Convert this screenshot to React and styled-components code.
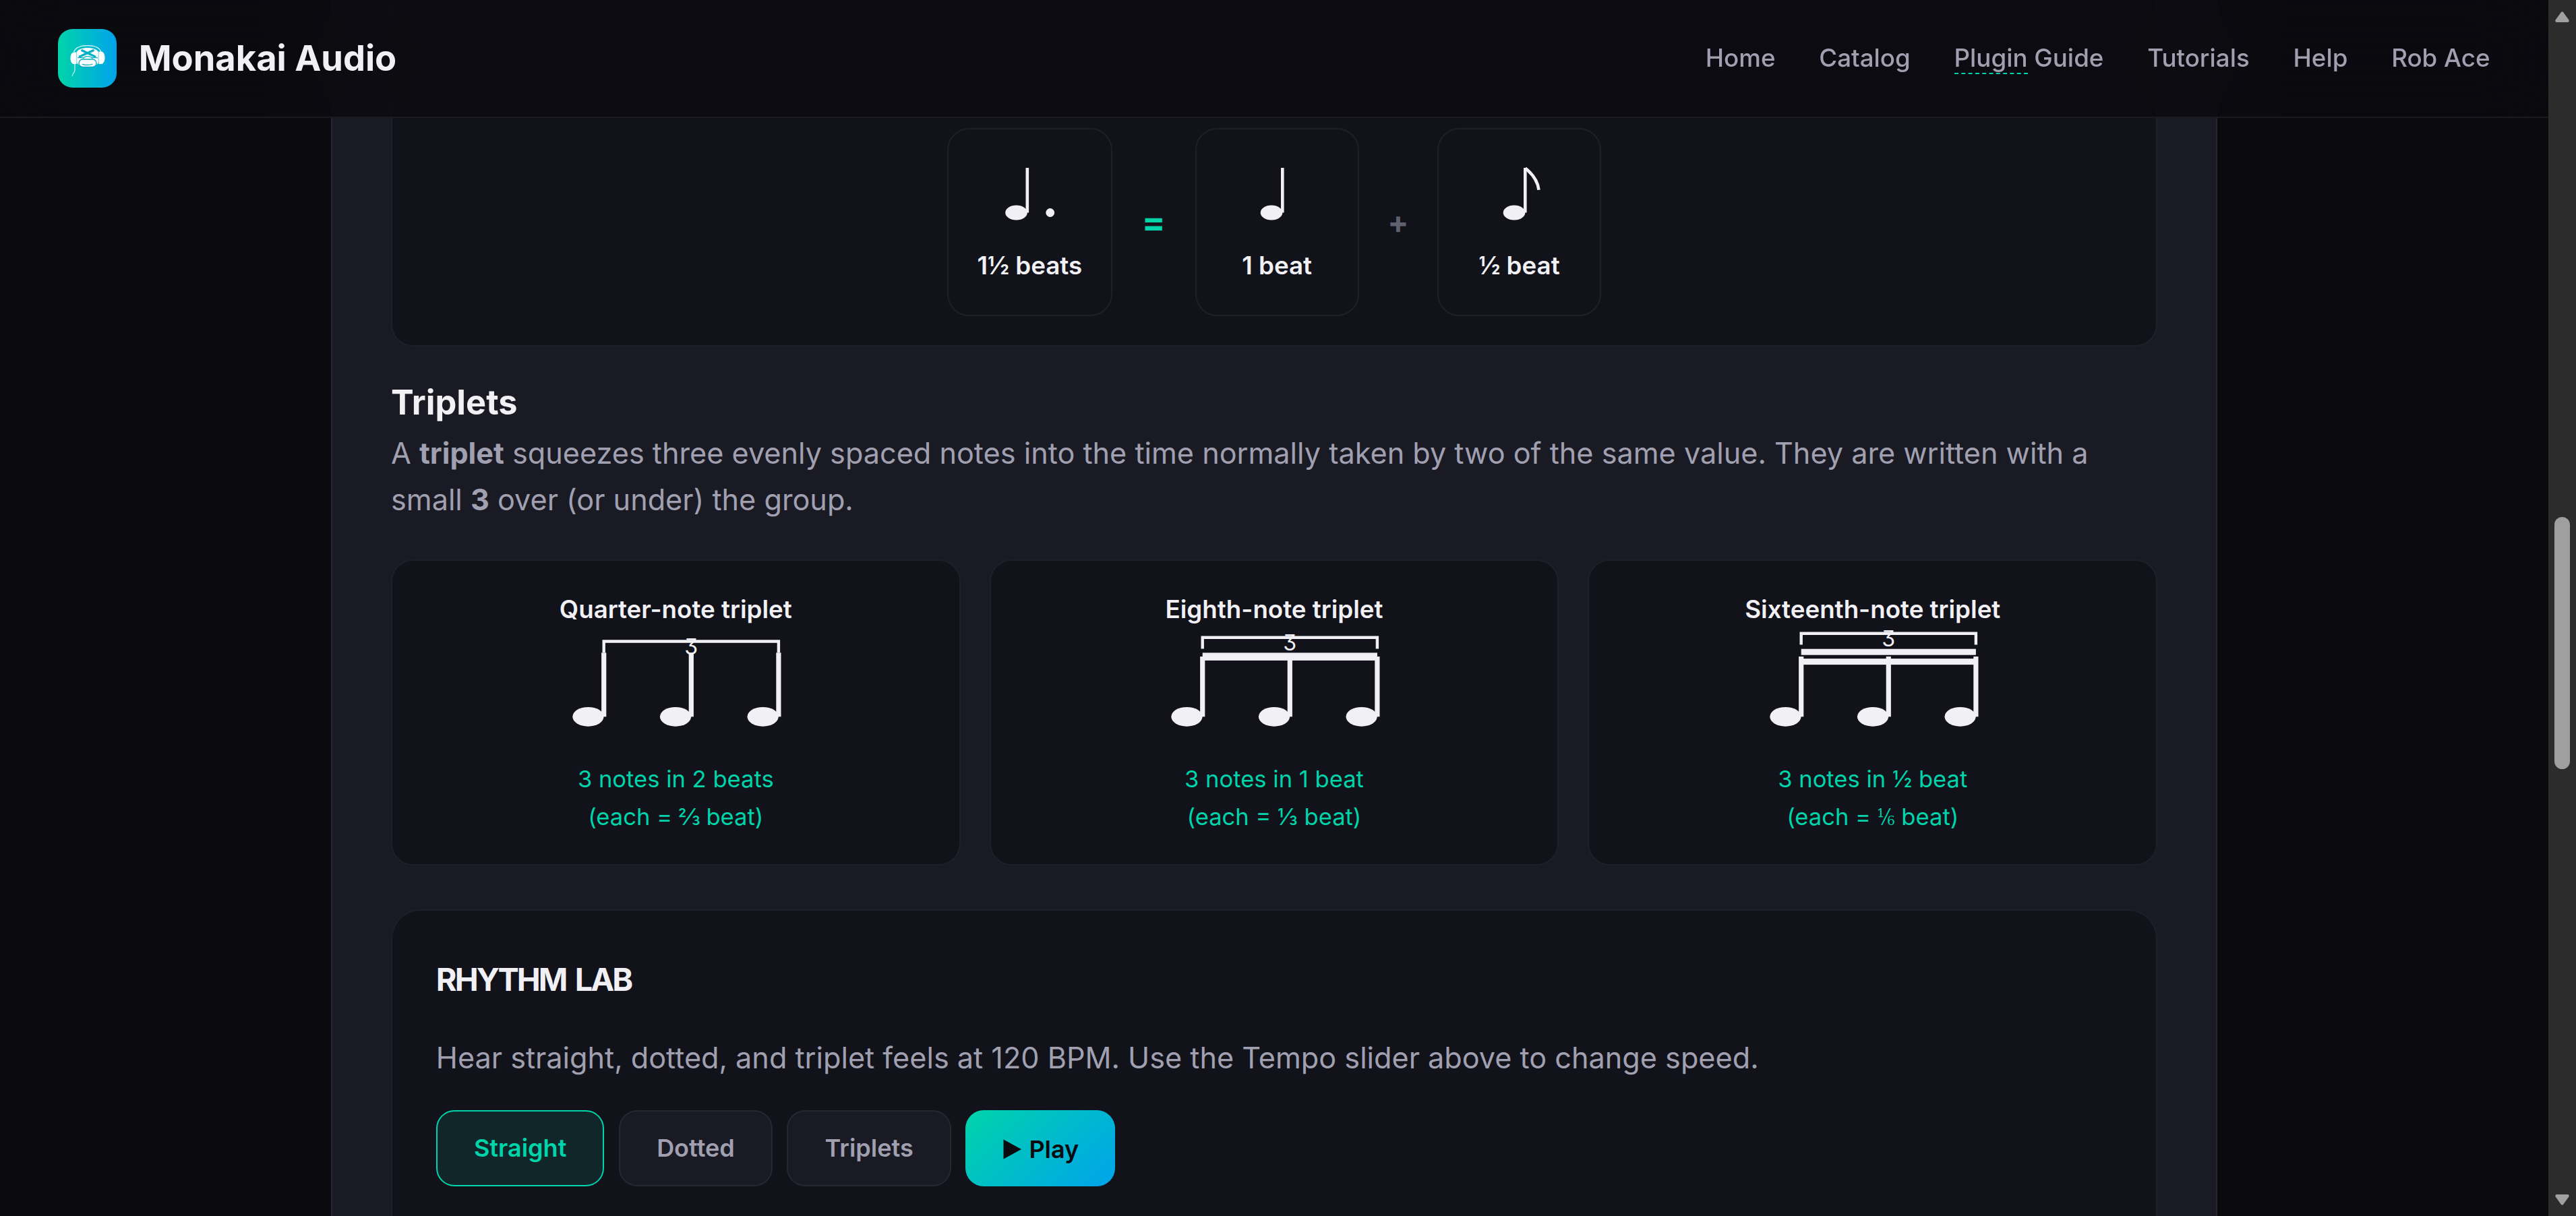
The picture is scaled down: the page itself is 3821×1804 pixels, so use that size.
import React from 'react'
import styled, { createGlobalStyle, ThemeProvider, css } from 'styled-components'

const theme = {
  colors: {
    page: '#0a0a0f',
    card: '#1a1a24',
    panel: '#12121a',
    border: 'rgba(255, 255, 255, 0.06)',
    text: '#f0f0f5',
    muted: '#a0a0b0',
    dim: '#606070',
    accent: '#00d4aa',
    accentBlue: '#00a3eb',
  },
}

const GlobalStyle = createGlobalStyle`
  *, *::before, *::after {
    box-sizing: border-box;
  }

  body {
    margin: 0;
    background: #0a0a0f;
    font-family: Inter, 'Liberation Sans', sans-serif;
    font-size: 43.2px;
    line-height: 1.6;
  }
`

const Window = styled.div`
  display: flex;
  height: 1804px;
  overflow: hidden;
  background: ${({ theme }) => theme.colors.page};
  color: ${({ theme }) => theme.colors.text};
`

const Viewport = styled.div`
  position: relative;
  flex: 1;
  height: 100%;
  overflow: hidden;
`

/* header */

const Header = styled.header`
  position: absolute;
  top: 0;
  left: 0;
  right: 0;
  z-index: 10;
  display: flex;
  align-items: center;
  justify-content: space-between;
  height: 175px;
  padding: 0 86.4px;
  border-bottom: 2px solid #1a1a1f;
  background: rgba(10, 10, 15, 0.8);
  backdrop-filter: blur(54px);
`

const Brand = styled.a`
  display: flex;
  align-items: center;
  gap: 32.4px;
  font-size: 52.4px;
  font-weight: 700;
  line-height: 86.4px;
`

const BrandMark = styled.span`
  display: block;
  width: 87px;
  height: 87px;
  border-radius: 21.6px;
  background: linear-gradient(
    90deg,
    ${({ theme }) => theme.colors.accent},
    ${({ theme }) => theme.colors.accentBlue}
  );

  svg {
    display: block;
  }
`

const Nav = styled.nav`
  display: flex;
  gap: 64.8px;
`

const NavLink = styled.a`
  font-size: 36.72px;
  font-weight: 500;
  line-height: 58.75px;
  color: ${({ theme }) => theme.colors.muted};
`

const Term = styled.span`
  border-bottom: 2px dashed ${({ theme }) => theme.colors.accent};
`

/* page content */

const Article = styled.main`
  width: 2798px;
  height: 1900px;
  margin: 0 auto;
  padding: 0 87px;
  border: solid #26262f;
  border-width: 0 2px;
  background: ${({ theme }) => theme.colors.card};
`

const panel = css`
  border: 2px solid ${({ theme }) => theme.colors.border};
  background: ${({ theme }) => theme.colors.panel};
`

const EquationPanel = styled.section`
  ${panel}
  display: flex;
  align-items: flex-end;
  justify-content: center;
  gap: 43.2px;
  height: 514px;
  padding: 0 43.2px 43.2px;
  border-top: 0;
  border-radius: 0 0 32.4px 32.4px;
`

const NoteChip = styled.div`
  display: flex;
  flex-direction: column;
  align-items: center;
  min-width: 243px;
  padding: 43.2px 42.6px;
  border: 2px solid ${({ theme }) => theme.colors.border};
  border-radius: 32.4px;
  font-size: 36.72px;
  font-weight: 600;
  line-height: 58.75px;
  white-space: nowrap;

  svg {
    display: block;
  }
`

const Operator = styled.span`
  display: flex;
  align-items: center;
  justify-content: center;
  width: ${({ $equals }) => ($equals ? '36.5px' : '30px')};
  height: 279px;
  color: ${({ $equals, theme }) =>
    $equals ? theme.colors.accent : theme.colors.dim};
  font-size: ${({ $equals }) => ($equals ? '52px' : '46px')};
  font-weight: 700;
`

const Heading = styled.h3`
  margin: 43px 0 0;
  font-size: 50.54px;
  font-weight: 700;
  line-height: 80.8px;
`

const Text = styled.p`
  margin: 0;
  color: ${({ theme }) => theme.colors.muted};
  font-size: 43.2px;
  line-height: 69.12px;
`

const TripletGrid = styled.div`
  display: grid;
  grid-template-columns: repeat(3, 1fr);
  gap: 43.2px;
  margin-top: 54px;
`

const TripletCard = styled.div`
  ${panel}
  display: flex;
  flex-direction: column;
  align-items: center;
  height: 454px;
  padding: 43.2px;
  border-radius: 32.4px;

  svg {
    display: block;
    overflow: visible;
  }
`

const TripletTitle = styled.strong`
  font-size: 36.72px;
  font-weight: 600;
  line-height: 58.75px;
`

const TripletCaption = styled.span`
  color: ${({ theme }) => theme.colors.accent};
  font-size: 34.56px;
  line-height: 55.3px;
`

const TupletNumber = styled.text`
  font-size: 32px;
  font-feature-settings: 'cv09';
`

const Fraction = styled.span`
  margin: 0 -1px;
`

const SerifFraction = styled.span`
  display: inline-block;
  margin: 0 -3.5px;
  font-family: 'DejaVu Serif', serif;
  font-size: 34px;
  line-height: 1;
  transform: scaleX(0.8);
`

const Lab = styled.section`
  ${panel}
  height: 700px;
  margin-top: 64.8px;
  padding: 64.8px;
  border-radius: 43.2px;
`

const LabTitle = styled.h4`
  margin: 0 0 45px;
  font-size: 46.8px;
  font-weight: 700;
  line-height: 74px;
  letter-spacing: -2.9px;
  word-spacing: 5px;
`

const ButtonRow = styled.div`
  display: flex;
  gap: 21.6px;
  margin-top: 43.2px;
`

const Button = styled.button`
  display: flex;
  align-items: center;
  height: 113px;
  padding: 0 54.1px;
  border: 2px solid ${({ theme }) => theme.colors.border};
  border-radius: 27px;
  background: ${({ theme }) => theme.colors.card};
  color: ${({ theme }) => theme.colors.muted};
  font-family: inherit;
  font-size: 36px;
  font-weight: 600;

  ${({ $active }) =>
    $active &&
    css`
      border-color: ${({ theme }) => theme.colors.accent};
      background: rgba(0, 212, 170, 0.1);
      color: ${({ theme }) => theme.colors.accent};
    `}
`

const PlayButton = styled(Button)`
  gap: 11px;
  padding: 4px 54px 0 56px;
  border: 0;
  background: linear-gradient(
    135deg,
    ${({ theme }) => theme.colors.accent},
    ${({ theme }) => theme.colors.accentBlue}
  );
  color: ${({ theme }) => theme.colors.page};
`

/* scrollbar */

const Scrollbar = styled.div`
  display: flex;
  flex-direction: column;
  align-items: center;
  justify-content: space-between;
  width: 41px;
  height: 100%;
  padding: 17px 0 16px;
  background: #2c2c2c;
`

const Track = styled.div`
  flex: 1;
  padding-top: 734px;
`

const Thumb = styled.div`
  width: 23px;
  height: 374px;
  border-radius: 12px;
  background: #9f9f9f;
`

function MonkeyLogo() {
  return (
    <svg width="87" height="87" viewBox="0 0 87 87" fill="none">
      <path d="M23.500 34C26 27.500 34 24.600 44 24.600S61.500 27.500 64 34" stroke="#e8fbff" strokeWidth="1.2" />
      <path d="M27.500 35C29 30.500 36 28 44 28s14.500 2.500 16.500 7v14c-2 5-8 7.500-16.500 7.500S29.500 54 27.500 49z" fill="#fff" />
      <path d="M24 34.500h3.500v17.500H24c-3.600 0-5.500-4-5.500-8.600S20.400 34.500 24 34.500z" fill="#fff" />
      <path d="M60.500 33.500h3.500c3.600 0 5.500 4.500 5.500 9S67.500 52 64 52h-3.500z" fill="#fff" />
      <path d="M60 34.500v17M27.700 34.500v17" stroke="#5cc7da" strokeWidth="0.700" />
      <path d="M34.500 31.300L56 41.500M53.500 31.300L31 41.500" stroke="#08b2c6" strokeWidth="3.400" />
      <path d="M29 42.600h8.500M50.500 42.600H59" stroke="#08b2c6" strokeWidth="1.400" />
      <path d="M37.500 44c2-4.500 11.500-4.500 13.500 0" fill="#fff" stroke="#08b2c6" strokeWidth="1.200" />
      <rect x="31" y="45" width="26" height="11.500" rx="5.700" fill="#fff" stroke="#08a9bd" strokeWidth="1.400" />
      <path d="M36 52.300c4 1.400 12 1.400 15.500-.3" stroke="#08a9bd" strokeWidth="1.300" />
      <path d="M25 52c-.5 4 .8 7.500-.4 11-1 2.500-3 3-3.400 7" stroke="#e8fbff" strokeWidth="1.100" />
    </svg>
  )
}

function Note({ dotted, flag }) {
  const { text } = theme.colors
  return (
    <svg width="90" height="129.6" viewBox="0 0 90 129.6" fill={text}>
      <ellipse cx={dotted ? 25.5 : 37} cy="80.500" rx="16.300" ry="10.900" />
      <rect x={dotted ? 39.5 : 51} y="14" width="4.600" height="66.500" />
      {dotted && <circle cx="75.700" cy="80.500" r="6.400" />}
      {flag && (
        <path d="M53.500 14.500Q71.500 29 73.500 46.700" fill="none" stroke={text} strokeWidth="4.600" />
      )}
    </svg>
  )
}

// heads are 129.6px apart, each stem sits on the right edge of its head
const HEADS = [50.4, 180, 309.6]

function TripletNotes({ stemTop, beams, bracketTop }) {
  const { text } = theme.colors
  const left = HEADS[0] + 23.3
  const right = HEADS[2] + 23.3
  return (
    <svg width="360" height="194.4" viewBox="0 0 360 194.4" fill={text}>
      {HEADS.map(x => (
        <React.Fragment key={x}>
          <ellipse cx={x} cy="129.300" rx="23.100" ry="14.400" />
          <rect x={x + 19.7} y={stemTop} width="7.200" height={129.3 - stemTop} />
        </React.Fragment>
      ))}
      {beams.map(([y, height]) => (
        <rect key={y} x={left} y={y} width={right - left} height={height} />
      ))}
      <path
        d={`M${left} ${bracketTop + 19}V${bracketTop + 2.2}H${right}V${bracketTop + 19}`}
        fill="none"
        stroke={text}
        strokeWidth="4.400"
      />
      <TupletNumber x={(left + right) / 2} y={bracketTop + 21.5} textAnchor="middle">
        3
      </TupletNumber>
    </svg>
  )
}

const TRIPLETS = [
  {
    title: 'Quarter-note triplet',
    length: '3 notes in 2 beats',
    fraction: <Fraction>⅔</Fraction>,
    notes: { stemTop: 34.3, beams: [], bracketTop: 15.3 },
  },
  {
    title: 'Eighth-note triplet',
    length: '3 notes in 1 beat',
    fraction: '⅓',
    notes: { stemTop: 40, beams: [[34.4, 11.5]], bracketTop: 9.5 },
  },
  {
    title: 'Sixteenth-note triplet',
    length: '3 notes in ½ beat',
    fraction: <SerifFraction>⅙</SerifFraction>,
    notes: { stemTop: 40, beams: [[28.7, 9], [43.1, 9]], bracketTop: 3.6 },
  },
]

const FEELS = ['Straight', 'Dotted', 'Triplets']

export default function App() {
  const [feel, setFeel] = React.useState('Straight')

  return (
    <ThemeProvider theme={theme}>
      <GlobalStyle />
      <Window>
        <Viewport>
          <Header>
            <Brand>
              <BrandMark>
                <MonkeyLogo />
              </BrandMark>
              Monakai Audio
            </Brand>
            <Nav>
              <NavLink>Home</NavLink>
              <NavLink>Catalog</NavLink>
              <NavLink>
                <Term>Plugin</Term> Guide
              </NavLink>
              <NavLink>Tutorials</NavLink>
              <NavLink>Help</NavLink>
              <NavLink>Rob Ace</NavLink>
            </Nav>
          </Header>

          <Article>
            <EquationPanel>
              <NoteChip>
                <Note dotted />
                1½ beats
              </NoteChip>
              <Operator $equals>=</Operator>
              <NoteChip>
                <Note />1 beat
              </NoteChip>
              <Operator>+</Operator>
              <NoteChip>
                <Note flag />½ beat
              </NoteChip>
            </EquationPanel>

            <Heading>Triplets</Heading>
            <Text>
              A <strong>triplet</strong> squeezes three evenly spaced notes into the time
              normally taken by two of the same value. They are written with a small{' '}
              <strong>3</strong> over (or under) the group.
            </Text>

            <TripletGrid>
              {TRIPLETS.map(({ title, length, fraction, notes }) => (
                <TripletCard key={title}>
                  <TripletTitle>{title}</TripletTitle>
                  <TripletNotes {...notes} />
                  <TripletCaption>{length}</TripletCaption>
                  <TripletCaption>(each = {fraction} beat)</TripletCaption>
                </TripletCard>
              ))}
            </TripletGrid>

            <Lab>
              <LabTitle>RHYTHM LAB</LabTitle>
              <Text>
                Hear straight, dotted, and triplet feels at 120 BPM. Use the Tempo slider
                above to change speed.
              </Text>
              <ButtonRow>
                {FEELS.map(name => (
                  <Button key={name} $active={name === feel} onClick={() => setFeel(name)}>
                    {name}
                  </Button>
                ))}
                <PlayButton>
                  <svg width="27" height="30" viewBox="0 0 27 30" fill="currentColor">
                    <path d="M0.500 0.500L27 15L0.500 29.500z" />
                  </svg>
                  Play
                </PlayButton>
              </ButtonRow>
            </Lab>
          </Article>
        </Viewport>

        <Scrollbar>
          <svg width="21" height="16" viewBox="0 0 21 16" fill="#a0a0a0">
            <path d="M9 1Q10.500-.6 12 1L20.300 12.500Q21.500 16 18.500 16H2.500Q-.5 16 .7 12.500z" />
          </svg>
          <Track>
            <Thumb />
          </Track>
          <svg width="21" height="16" viewBox="0 0 21 16" fill="#a0a0a0">
            <path d="M9 15Q10.500 16.600 12 15L20.300 3.500Q21.500 0 18.500 0H2.500Q-.5 0 .7 3.500z" />
          </svg>
        </Scrollbar>
      </Window>
    </ThemeProvider>
  )
}
